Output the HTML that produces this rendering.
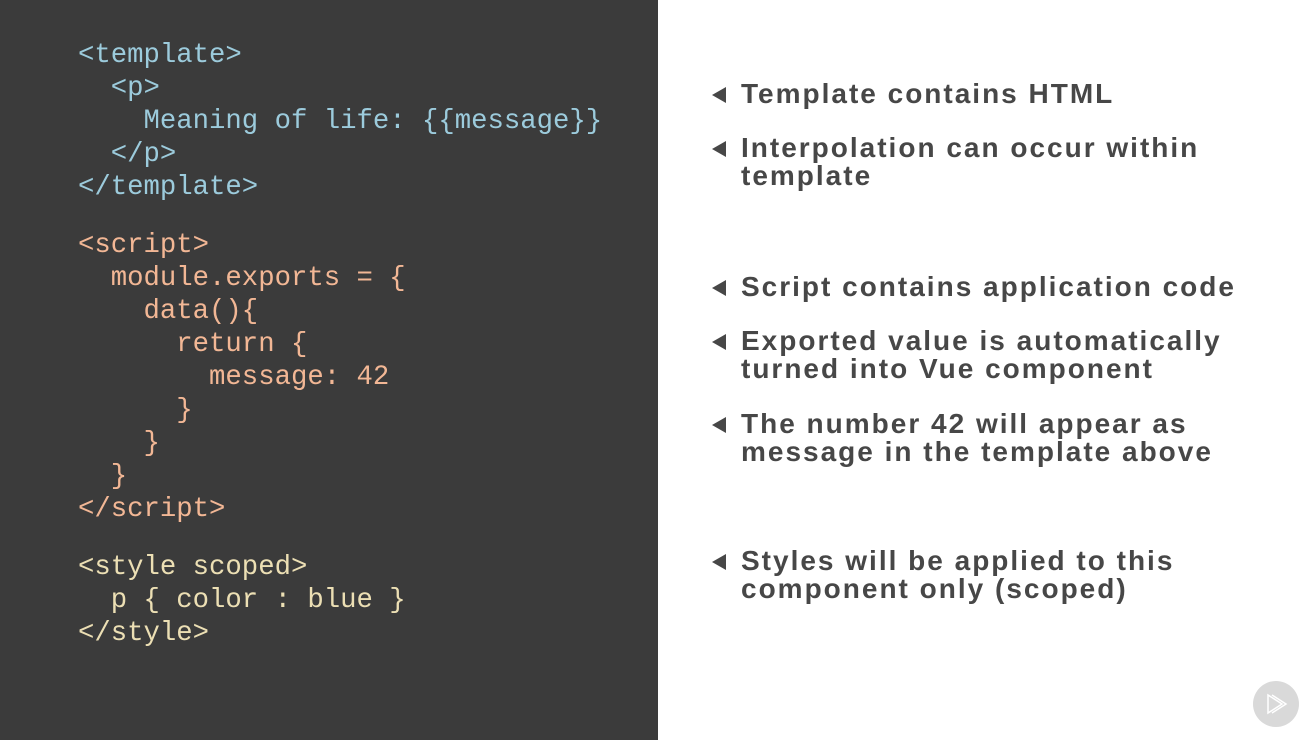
<!DOCTYPE html>
<html><head><style>
body{margin:0;width:1316px;height:740px;background:#fff;position:relative;overflow:hidden}
#l{position:absolute;left:0;top:0;width:658px;height:740px;background:#3b3b3b}
.c{position:absolute;left:78px;font-family:"Liberation Mono",monospace;font-size:27.3px;line-height:33px;white-space:pre;margin:0}
.b{color:#9ccbdc}.o{color:#f2b795}.y{color:#ecdfb4}
.r{position:absolute;left:741px;font-family:"Liberation Sans",sans-serif;font-weight:bold;font-size:28px;line-height:28px;color:#474747;letter-spacing:2px}
.r:before{content:"";position:absolute;left:-29px;top:7px;border-right:14px solid #474747;border-top:8px solid transparent;border-bottom:8px solid transparent}
</style></head><body>
<div id="l">
<pre class="c b" style="top:39px">&lt;template&gt;
  &lt;p&gt;
    Meaning of life: {{message}}
  &lt;/p&gt;
&lt;/template&gt;</pre>
<pre class="c o" style="top:229px">&lt;script&gt;
  module.exports = {
    data(){
      return {
        message: 42
      }
    }
  }
&lt;/script&gt;</pre>
<pre class="c y" style="top:551px">&lt;style scoped&gt;
  p { color : blue }
&lt;/style&gt;</pre>
</div>
<div class="r" style="top:80px">Template contains HTML</div>
<div class="r" style="top:134px">Interpolation can occur within<br>template</div>
<div class="r" style="top:273px">Script contains application code</div>
<div class="r" style="top:327px">Exported value is automatically<br>turned into Vue component</div>
<div class="r" style="top:410px">The number 42 will appear as<br>message in the template above</div>
<div class="r" style="top:547px">Styles will be applied to this<br>component only (scoped)</div>
<svg style="position:absolute;left:1252px;top:680px" width="48" height="48" viewBox="0 0 48 48">
<circle cx="24" cy="24" r="23" fill="#d9d9d9"/>
<path d="M16 15v18l14-9z M20 15l14 9-14 9" fill="none" stroke="#fff" stroke-width="1.5"/>
</svg>
</body></html>
